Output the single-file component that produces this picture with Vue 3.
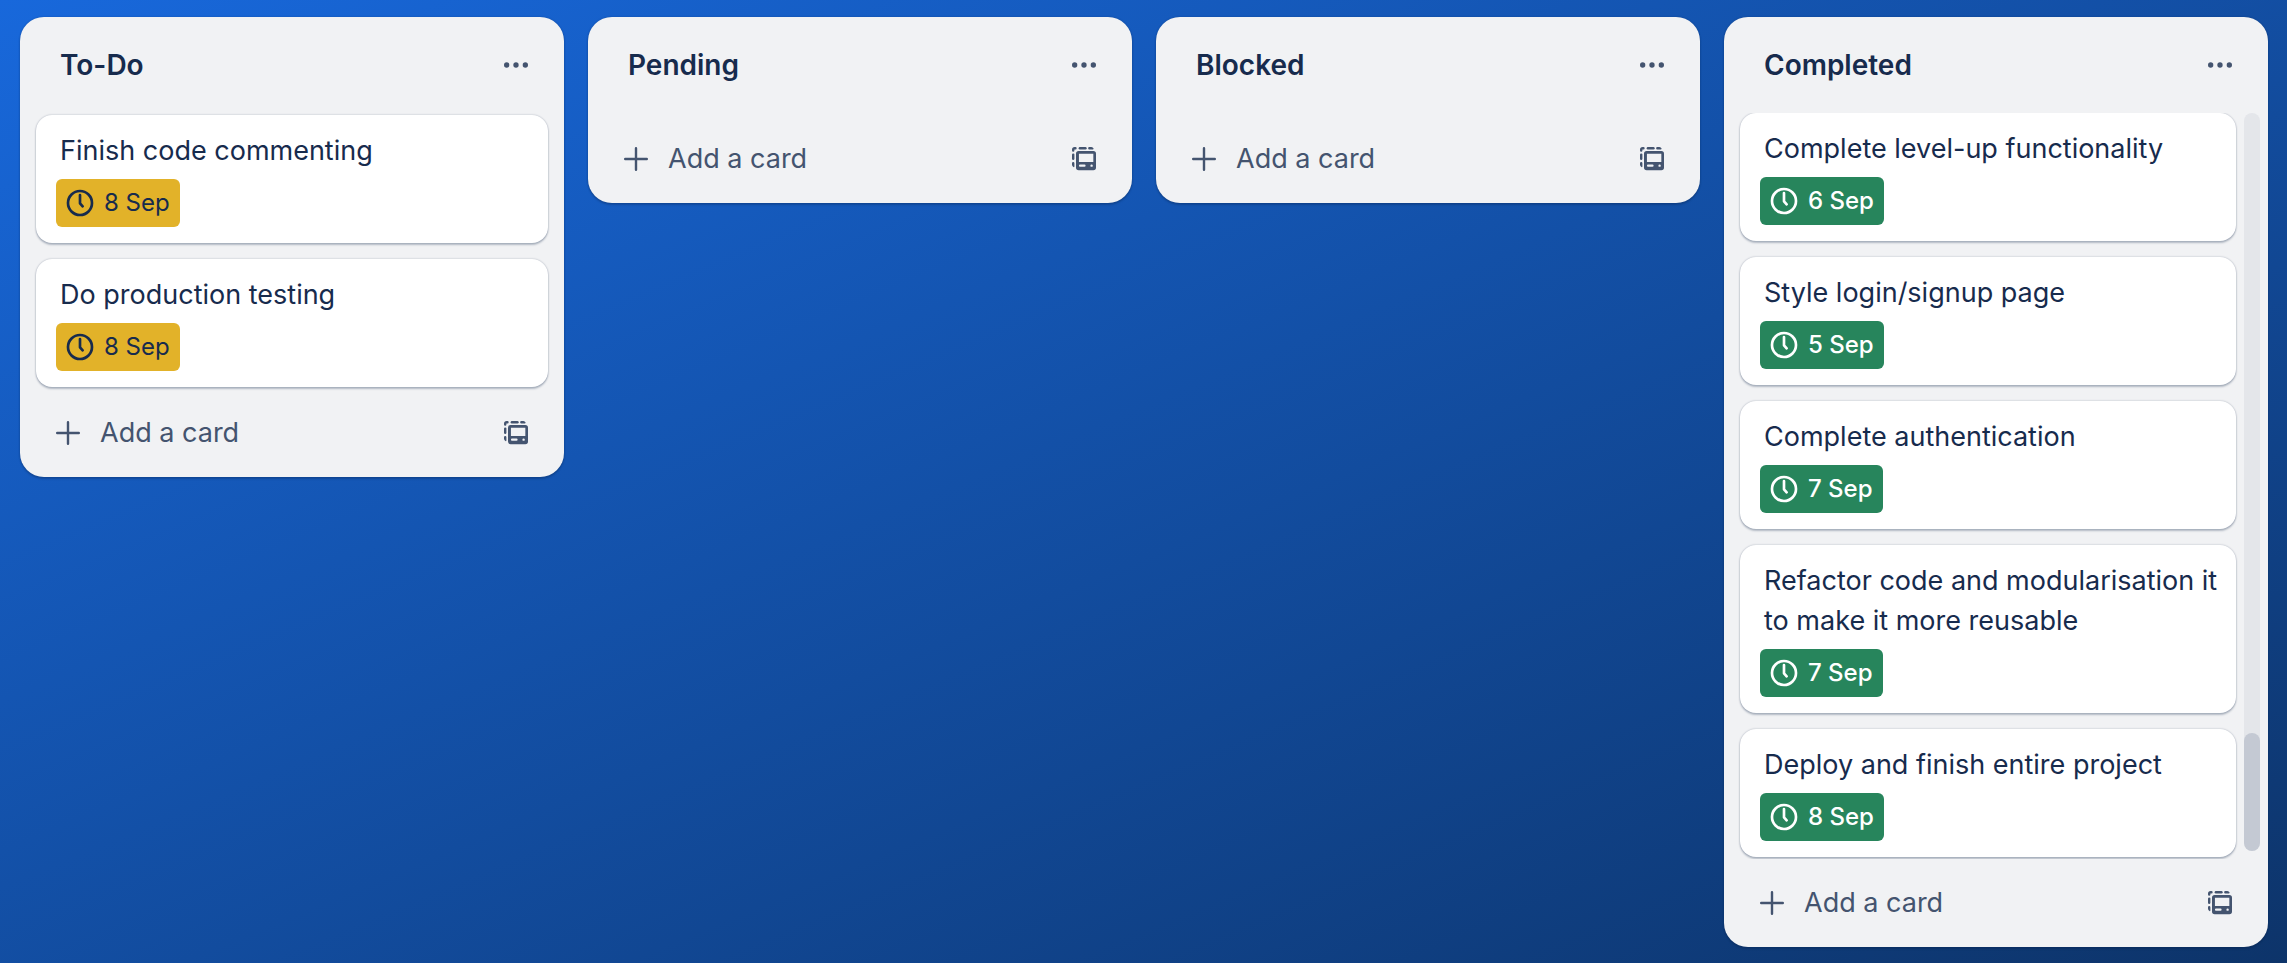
<script setup>
const lists = [
  {
    id: 'todo',
    title: 'To-Do',
    cards: [
      { title: 'Finish code commenting', due: '8 Sep', status: 'soon' },
      { title: 'Do production testing', due: '8 Sep', status: 'soon' },
    ],
  },
  { id: 'pending', title: 'Pending', cards: [] },
  { id: 'blocked', title: 'Blocked', cards: [] },
  {
    id: 'completed',
    title: 'Completed',
    scrollable: true,
    cards: [
      { title: 'Complete level-up functionality', due: '6 Sep', status: 'done' },
      { title: 'Style login/signup page', due: '5 Sep', status: 'done' },
      { title: 'Complete authentication', due: '7 Sep', status: 'done' },
      { title: 'Refactor code and modularisation it to make it more reusable', due: '7 Sep', status: 'done' },
      { title: 'Deploy and finish entire project', due: '8 Sep', status: 'done' },
    ],
  },
]
</script>

<template>
  <main class="board">
    <section v-for="list in lists" :key="list.id" class="list" :aria-labelledby="list.id">
      <header class="list-header">
        <h2 :id="list.id" class="list-title">{{ list.title }}</h2>
        <button type="button" class="icon-button" aria-label="List actions">
          <svg class="icon" viewBox="0 0 24 24" fill="currentColor" aria-hidden="true">
            <circle cx="5" cy="12" r="2" />
            <circle cx="12" cy="12" r="2" />
            <circle cx="19" cy="12" r="2" />
          </svg>
        </button>
      </header>

      <div class="list-body" :class="{ scrollable: list.scrollable }">
        <ol class="cards">
          <li v-for="card in list.cards" :key="card.title" class="card">
            <a href="#" class="card-title">{{ card.title }}</a>
            <span class="badge" :class="card.status">
              <svg class="icon" viewBox="0 0 24 24" fill="none" stroke="currentColor" stroke-width="2" stroke-linecap="round" stroke-linejoin="round" aria-hidden="true">
                <circle cx="12" cy="12" r="9" />
                <path d="M12 6v6.2l2 2.3" />
              </svg>
              <span>{{ card.due }}</span>
            </span>
          </li>
        </ol>
        <div v-if="list.scrollable" class="track"><div class="thumb"></div></div>
      </div>

      <footer class="list-footer">
        <button type="button" class="add-button">
          <svg class="icon" viewBox="0 0 24 24" fill="none" stroke="currentColor" stroke-width="1.8" stroke-linecap="round" aria-hidden="true">
            <path d="M12 3.9v16.2M3.9 12h16.2" />
          </svg>
          <span>Add a card</span>
        </button>
        <button type="button" class="icon-button" aria-label="Create from template">
          <svg class="icon" viewBox="0 0 24 24" fill="currentColor" aria-hidden="true">
            <path d="M5 3h.6a.9.9 0 0 1 0 1.8H4.8v.8a.9.9 0 0 1-1.8 0V5a2 2 0 0 1 2-2z" />
            <rect x="8" y="3" width="6" height="1.8" rx=".9" />
            <path d="M16 3h1.5a2 2 0 0 1 1.7 1.2.5.5 0 0 1-.5.6H16A.9.9 0 0 1 16 3z" />
            <rect x="3" y="7.8" width="1.8" height="5" rx=".9" />
            <path d="M3 15.2a.9.9 0 0 1 1.8 0v2.3a.5.5 0 0 1-.7.5A2 2 0 0 1 3 16.3z" />
            <path fill-rule="evenodd" d="M8 6h11a2 2 0 0 1 2 2v10.4a2 2 0 0 1-2 2H8a2 2 0 0 1-2-2V8a2 2 0 0 1 2-2zM8.2 8v6.3H19V8zM9 16.2a.8.8 0 0 0 0 1.6h3.4a.8.8 0 0 0 0-1.6zM17.7 16.1a.9.9 0 1 0 0 1.8.9.9 0 0 0 0-1.8z" />
          </svg>
        </button>
      </footer>
    </section>
  </main>
</template>

<style>
body {
  margin: 0;
}
</style>

<style scoped>
.board {
  box-sizing: border-box;
  min-height: 100vh;
  display: flex;
  align-items: flex-start;
  gap: 24px;
  padding: 17px 19px 8px 20px;
  background: linear-gradient(to bottom right, #1868db, #0d346a);
  font-family: Inter, "Liberation Sans", sans-serif;
  font-size: 27px;
  line-height: 40px;
  color: #172b4d;
}

.list {
  flex: 1 1 0;
  min-width: 0;
  border-radius: 24px;
  background: #f1f2f4;
  box-shadow: 0 2px 2px rgba(9, 30, 66, 0.25), 0 0 2px rgba(9, 30, 66, 0.31);
}

.list-header,
.list-footer {
  display: flex;
  align-items: center;
  justify-content: space-between;
}

.list-header {
  height: 96px;
  padding: 0 32px 0 40px;
}

.list-title {
  margin: 0;
  font-size: 28px;
  font-weight: 600;
}

.list-footer {
  padding: 16px 32px;
}

.icon {
  display: block;
  flex: none;
  width: 32px;
  height: 32px;
}

.icon-button,
.add-button {
  display: flex;
  align-items: center;
  height: 56px;
  padding: 0;
  border: 0;
  background: none;
  color: #44546f;
  font: inherit;
  cursor: pointer;
}

.add-button {
  gap: 16px;
}

.list-body {
  display: flex;
  gap: 8px;
  padding: 2px 16px 0;
}

.list-body.scrollable {
  padding: 0 8px 0 16px;
  overflow: hidden;
}

.cards {
  flex: 1 1 0;
  min-width: 0;
  margin: 0;
  padding: 0;
  list-style: none;
}

.card {
  display: flex;
  flex-direction: column;
  align-items: flex-start;
  gap: 8px;
  margin-bottom: 16px;
  padding: 16px 12px 16px 20px;
  border-radius: 16px;
  background: #fff;
  box-shadow: 0 2px 2px rgba(9, 30, 66, 0.25), 0 0 2px rgba(9, 30, 66, 0.31);
}

.card:last-child {
  margin-bottom: 2px;
}

.card-title {
  padding-left: 4px;
  color: inherit;
  text-decoration: none;
}

.badge {
  display: flex;
  align-items: center;
  gap: 8px;
  height: 48px;
  padding: 0 10px 0 8px;
  border-radius: 6px;
  font-size: 24px;
}

.badge.soon {
  background: #e2b229;
}

.badge.done {
  background: #27855c;
  color: #fff;
  font-weight: 500;
}

.track {
  display: flex;
  align-items: flex-end;
  width: 16px;
  margin-bottom: 8px;
  border-radius: 8px;
  background: #e4e6ea;
}

.thumb {
  width: 100%;
  height: 16%;
  border-radius: 8px;
  background: #c4c9d3;
}
</style>
